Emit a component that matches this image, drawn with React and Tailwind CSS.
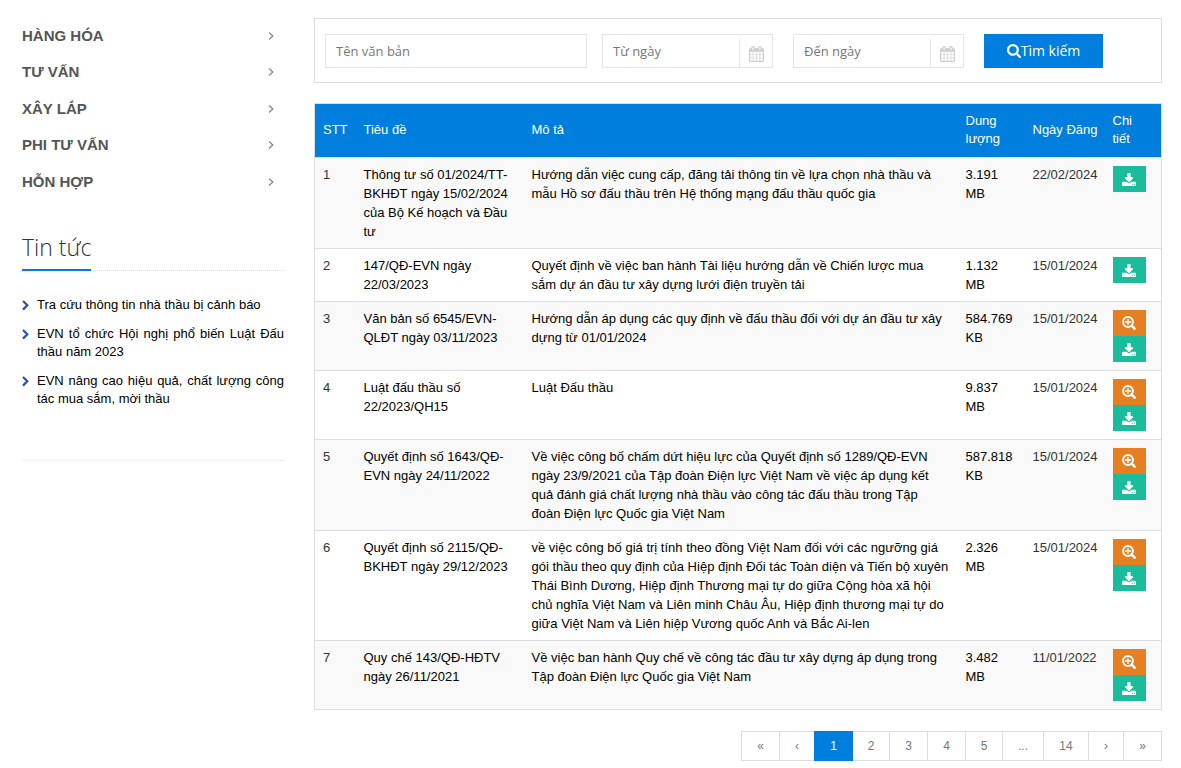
import { useState } from 'react'

const categories = ['HÀNG HÓA', 'TƯ VẤN', 'XÂY LẮP', 'PHI TƯ VẤN', 'HỖN HỢP']

const news = [
  'Tra cứu thông tin nhà thầu bị cảnh báo',
  'EVN tổ chức Hội nghị phổ biến Luật Đấu thầu năm 2023',
  'EVN nâng cao hiệu quả, chất lượng công tác mua sắm, mời thầu'
]

const documents = [
  {
    title: 'Thông tư số 01/2024/TT-BKHĐT ngày 15/02/2024 của Bộ Kế hoạch và Đầu tư',
    description: 'Hướng dẫn việc cung cấp, đăng tải thông tin về lựa chọn nhà thầu và mẫu Hồ sơ đấu thầu trên Hệ thống mạng đấu thầu quốc gia',
    size: '3.191 MB',
    date: '22/02/2024',
    preview: false
  },
  {
    title: '147/QĐ-EVN ngày 22/03/2023',
    description: 'Quyết định về việc ban hành Tài liệu hướng dẫn về Chiến lược mua sắm dự án đầu tư xây dựng lưới điện truyền tải',
    size: '1.132 MB',
    date: '15/01/2024',
    preview: false
  },
  {
    title: 'Văn bản số 6545/EVN-QLĐT ngày 03/11/2023',
    description: 'Hướng dẫn áp dụng các quy định về đấu thầu đối với dự án đầu tư xây dựng từ 01/01/2024',
    size: '584.769 KB',
    date: '15/01/2024',
    preview: true
  },
  {
    title: 'Luật đấu thầu số 22/2023/QH15',
    description: 'Luật Đấu thầu',
    size: '9.837 MB',
    date: '15/01/2024',
    preview: true
  },
  {
    title: 'Quyết định số 1643/QĐ-EVN ngày 24/11/2022',
    description: 'Về việc công bố chấm dứt hiệu lực của Quyết định số 1289/QĐ-EVN ngày 23/9/2021 của Tập đoàn Điện lực Việt Nam về việc áp dụng kết quả đánh giá chất lượng nhà thầu vào công tác đấu thầu trong Tập đoàn Điện lực Quốc gia Việt Nam',
    size: '587.818 KB',
    date: '15/01/2024',
    preview: true
  },
  {
    title: 'Quyết định số 2115/QĐ-BKHĐT ngày 29/12/2023',
    description: 'về việc công bố giá trị tính theo đồng Việt Nam đối với các ngưỡng giá gói thầu theo quy định của Hiệp định Đối tác Toàn diện và Tiến bộ xuyên Thái Bình Dương, Hiệp định Thương mại tự do giữa Cộng hòa xã hội chủ nghĩa Việt Nam và Liên minh Châu Âu, Hiệp định thương mại tự do giữa Việt Nam và Liên hiệp Vương quốc Anh và Bắc Ai-len',
    size: '2.326 MB',
    date: '15/01/2024',
    preview: true
  },
  {
    title: 'Quy chế 143/QĐ-HĐTV ngày 26/11/2021',
    description: 'Về việc ban hành Quy chế về công tác đầu tư xây dựng áp dụng trong Tập đoàn Điện lực Quốc gia Việt Nam',
    size: '3.482 MB',
    date: '11/01/2022',
    preview: true
  }
]

const pages = [
  { label: '«', width: 'w-[39px]' },
  { label: '‹', width: 'w-[36px]' },
  { label: '1', width: 'w-[39px]' },
  { label: '2', width: 'w-[38px]' },
  { label: '3', width: 'w-[39px]' },
  { label: '4', width: 'w-[39px]' },
  { label: '5', width: 'w-[38px]' },
  { label: '...', width: 'w-[42px]' },
  { label: '14', width: 'w-[46px]' },
  { label: '›', width: 'w-[36px]' },
  { label: '»', width: 'w-[39px]' }
]

const SearchIcon = () => (
  <svg className="size-3.5" viewBox="0 0 1664 1664" fill="currentColor" aria-hidden="true">
    <path d="M1152 704q0-185-131.500-316.500T704 256 387.500 387.500 256 704t131.500 316.500T704 1152t316.500-131.500T1152 704zm512 832q0 52-38 90t-90 38q-54 0-90-38l-343-342q-179 124-399 124-143 0-273.500-55.500t-225-150-150-225T0 704t55.500-273.500 150-225 225-150T704 0t273.500 55.500 225 150 150 225T1408 704q0 220-124 399l343 343q37 37 37 90z" />
  </svg>
)

const CalendarIcon = () => (
  <svg className="h-4 w-[15px]" viewBox="0 0 1664 1792" fill="currentColor" aria-hidden="true">
    <path d="M128 1664h288v-288H128v288zm352 0h320v-288H480v288zm-352-352h288V992H128v320zm352 0h320V992H480v320zM128 928h288V640H128v288zm736 736h320v-288H864v288zM480 928h320V640H480v288zm768 736h288v-288h-288v288zm-384-352h320V992H864v320zM512 448V160q0-13-9.500-22.500T480 128h-64q-13 0-22.500 9.500T384 160v288q0 13 9.500 22.500T416 480h64q13 0 22.500-9.500T512 448zm736 864h288V992h-288v320zM864 928h320V640H864v288zm384 0h288V640h-288v288zm32-480V160q0-13-9.500-22.500T1248 128h-64q-13 0-22.500 9.500T1152 160v288q0 13 9.500 22.500t22.500 9.500h64q13 0 22.500-9.500T1280 448zm384-64v1280q0 52-38 90t-90 38H128q-52 0-90-38t-38-90V384q0-52 38-90t90-38h128v-96q0-66 47-113T416 0h64q66 0 113 47t47 113v96h384v-96q0-66 47-113t113-47h64q66 0 113 47t47 113v96h128q52 0 90 38t38 90z" />
  </svg>
)

const ZoomIcon = () => (
  <svg className="size-3.5" viewBox="0 0 14 14" fill="none" stroke="currentColor" aria-hidden="true">
    <circle cx="6" cy="6" r="4.900" strokeWidth="2" />
    <path d="M6 3v6M3 6h6" strokeWidth="1.300" />
    <path d="M9.700 9.700l2.900 2.900" strokeWidth="2.600" strokeLinecap="round" />
  </svg>
)

const DownloadIcon = () => (
  <svg className="h-[13px] w-3.5" viewBox="0 0 1664 1536" fill="currentColor" aria-hidden="true">
    <path d="M1280 1344q0-26-19-45t-45-19-45 19-19 45 19 45 45 19 45-19 19-45zm256 0q0-26-19-45t-45-19-45 19-19 45 19 45 45 19 45-19 19-45zm128-224v320q0 40-28 68t-68 28H96q-40 0-68-28t-28-68v-320q0-40 28-68t68-28h465l135 136q58 56 136 56t136-56l136-136h464q40 0 68 28t28 68zm-325-569q17 41-14 70l-448 448q-18 19-45 19t-45-19L339 621q-31-29-14-70 17-39 59-39h256V64q0-26 19-45t45-19h256q26 0 45 19t19 45v448h256q42 0 59 39z" />
  </svg>
)

const DateField = ({ label, value, onChange }) => (
  <div className="flex w-[171px] h-[34px] border border-[#e5e5e5]">
    <input
      type="text"
      aria-label={label}
      value={value}
      onChange={(e) => onChange(e.target.value)}
      placeholder={label}
      className="flex-1 min-w-0 px-2.5 leading-8 outline-none placeholder:text-[#777]"
    />
    <button
      type="button"
      aria-label={`Chọn ${label}`}
      className="mt-1 w-[33px] pt-0.5 flex items-center justify-center border-l border-[#e5e5e5] text-[#ccc]"
    >
      <CalendarIcon />
    </button>
  </div>
)

const Sidebar = () => (
  <aside className="w-[262px] shrink-0">
    <nav>
      <ul>
        {categories.map((name, i) => (
          <li key={name} className={i % 2 ? 'h-[37px]' : 'h-9'}>
            <a href="#" className="flex items-center justify-between h-9 pr-2.5 text-[15px] font-bold text-[#555]">
              {name}
              <svg className="w-1.5 h-2.5" viewBox="0 0 6 10" fill="none" stroke="#888" strokeWidth="1.300" aria-hidden="true">
                <path d="M1 1.500L4.800 5 1 8.500" />
              </svg>
            </a>
          </li>
        ))}
      </ul>
    </nav>

    <div className="mt-[33px] border-b border-dotted border-[#e0e0e0] flex">
      <h2 className="-mb-px pb-2 border-b-2 border-[#007edd] font-['Open_Sans',sans-serif] text-[23px] leading-[28px] font-light text-[#333]">
        Tin tức
      </h2>
    </div>

    <ul className="mt-[25px] pb-[52px] border-b border-[#eee] flex flex-col gap-[11px] text-[13px] leading-[18px] text-black">
      {news.map((item) => (
        <li key={item} className="flex">
          <svg className="w-[15px] h-[18px] shrink-0" viewBox="0 0 15 18" fill="none" stroke="#2a4fb0" strokeWidth="2.200" aria-hidden="true">
            <path d="M1 5l4.300 4.300L1 13.600" />
          </svg>
          <a href="#" className="flex-1 text-justify">{item}</a>
        </li>
      ))}
    </ul>
  </aside>
)

const App = () => {
  const [name, setName] = useState('')
  const [from, setFrom] = useState('')
  const [to, setTo] = useState('')
  const [page, setPage] = useState('1')

  return (
    <div className="flex gap-[30px] pl-[22px] pr-[19px] pt-[18px] bg-white font-['Liberation_Sans',Arial,sans-serif] text-[13px] text-[#333]">
      <Sidebar />

      <main className="flex-1 min-w-0">
        {/* Search */}
        <form
          onSubmit={(e) => e.preventDefault()}
          className="flex border border-[#ddd] pt-[15px] pb-3.5 pl-2.5 pr-[58px] font-['Open_Sans',sans-serif]"
        >
          <input
            type="text"
            aria-label="Tên văn bản"
            value={name}
            onChange={(e) => setName(e.target.value)}
            placeholder="Tên văn bản"
            className="flex-1 min-w-0 h-[34px] mr-[15px] px-2.5 leading-8 border border-[#e5e5e5] outline-none placeholder:text-[#777]"
          />
          <div className="flex gap-5">
            <DateField label="Từ ngày" value={from} onChange={setFrom} />
            <DateField label="Đến ngày" value={to} onChange={setTo} />
            <button type="submit" className="w-[119px] h-[34px] flex items-center justify-center bg-[#007edd] text-sm text-white">
              <SearchIcon />
              Tìm kiếm
            </button>
          </div>
        </form>

        {/* Documents */}
        <table className="mt-5 w-full table-fixed border-collapse border border-[#ddd] text-left">
          <colgroup>
            <col className="w-[41px]" />
            <col className="w-[168px]" />
            <col />
            <col className="w-[67px]" />
            <col className="w-[80px]" />
            <col className="w-[57px]" />
          </colgroup>
          <thead>
            <tr className="h-[54px] bg-[#007edd] text-white leading-[18px]">
              <th className="px-2 pb-0.5 font-medium">STT</th>
              <th className="px-2 pb-0.5 font-medium">Tiêu đề</th>
              <th className="px-2 pb-0.5 font-medium">Mô tả</th>
              <th className="px-2 pb-0.5 font-medium">Dung lượng</th>
              <th className="pl-2 pb-0.5 font-medium whitespace-nowrap">Ngày Đăng</th>
              <th className="pl-2 pr-4 pb-0.5 font-medium">Chi tiết</th>
            </tr>
          </thead>
          <tbody>
            {documents.map((doc, i) => (
              <tr key={doc.title} className="border-t border-[#ddd] odd:bg-[#f9f9f9] align-top leading-[19px] text-black">
                <td className="px-2 pt-[7px] pb-[7px] text-[#333]">{i + 1}</td>
                <td className="px-2 pt-[7px] pb-[7px]">{doc.title}</td>
                <td className="px-2 pt-[7px] pb-[7px]">{doc.description}</td>
                <td className="px-2 pt-[7px] pb-[7px]">{doc.size}</td>
                <td className="pl-2 pt-[7px] pb-[7px] text-[#333]">{doc.date}</td>
                <td className="p-2">
                  <div className="w-[33px] text-white">
                    {doc.preview && (
                      <button type="button" aria-label="Xem" className="w-full h-[26px] flex items-center justify-center bg-[#e67e22]">
                        <ZoomIcon />
                      </button>
                    )}
                    <a href="#" aria-label="Tải về" className="h-[26px] flex items-center justify-center bg-[#1abc9c]">
                      <DownloadIcon />
                    </a>
                  </div>
                </td>
              </tr>
            ))}
          </tbody>
        </table>

        {/* Pagination */}
        <nav className="mt-[21px] flex justify-end">
          {pages.map((p) => (
            <button
              key={p.label}
              type="button"
              onClick={() => setPage(p.label)}
              className={`${p.width} h-[30px] -ml-px border text-xs ${
                p.label === page
                  ? 'relative z-10 bg-[#007edd] border-[#007edd] text-white'
                  : 'bg-white border-[#ddd] text-[#777]'
              }`}
            >
              {p.label}
            </button>
          ))}
        </nav>
      </main>
    </div>
  )
}

export default App
